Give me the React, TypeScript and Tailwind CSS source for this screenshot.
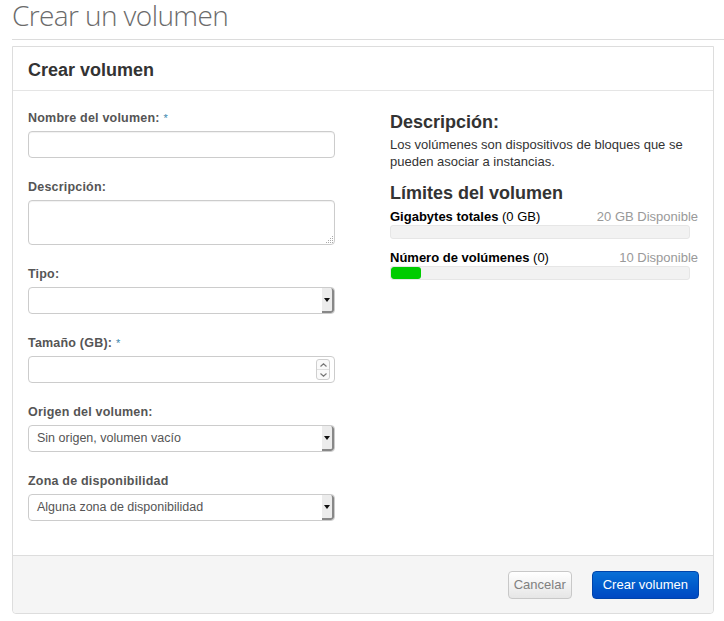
import React from 'react';

function Label({ text, required }: { text: string; required?: boolean }) {
  return (
    <div className="h-[20px] leading-[20px] text-[12.5px] font-bold text-[#555] mb-[3px] tracking-[0.2px]">
      {text}
      {required && <span className="ml-[4px] text-[#3a87ad] font-normal text-[11px] align-top">*</span>}
    </div>
  );
}

function SelectBox({ value }: { value?: string }) {
  return (
    <div className="flex h-[27px] w-[307px] rounded-[4px] border border-[#ccc] bg-white overflow-hidden">
      <div className="flex-1 pl-[8px] leading-[25px] text-[12.5px] text-[#555]">{value}</div>
      <div className="flex w-[12px] items-center justify-center bg-[#ececec] border-r-2 border-b-2 border-[#888] rounded-r-[3px]">
        <svg width="6" height="4" viewBox="0 0 6 4">
          <path d="M0 0h6L3 4z" fill="#111" />
        </svg>
      </div>
    </div>
  );
}

function Field({ label, required, children }: { label: string; required?: boolean; children: React.ReactNode }) {
  return (
    <div className="mb-[19px]">
      <Label text={label} required={required} />
      {children}
    </div>
  );
}

function Bar({ pct }: { pct: number }) {
  return (
    <div className="h-[14px] w-[300px] rounded-[3px] bg-[#f2f2f2] border border-[#e6e6e6] overflow-hidden">
      {pct > 0 && <div className="h-full rounded-[3px] bg-[#00cc00]" style={{ width: `${pct}%` }} />}
    </div>
  );
}

export default function App() {
  return (
    <div className="w-[724px] h-[621px] bg-white overflow-hidden font-['Liberation_Sans',Arial,sans-serif]">
      <div className="ml-[12px] h-[40px] border-b border-[#dcdcdc]">
        <h1 className="font-['Open_Sans',sans-serif] font-light text-[28px] leading-[30px] tracking-[-0.6px] text-[#6b6b6b]">
          Crear un volumen
        </h1>
      </div>

      <div className="ml-[12px] mt-[6px] w-[702px] border border-[#dddddd] rounded-b-[4px]">
        <div className="h-[44px] border-b border-[#e5e5e5] pl-[15px] flex items-center">
          <h3 className="text-[18px] font-bold text-[#333] leading-[20px] pt-[3px]">Crear volumen</h3>
        </div>

        <div className="flex pl-[15px] pt-[17px] h-[464px]">
          <div className="w-[307px]">
            <Field label="Nombre del volumen:" required>
              <div className="h-[27px] w-[307px] rounded-[4px] border border-[#ccc] bg-white shadow-[inset_0_1px_1px_rgba(0,0,0,0.06)]" />
            </Field>
            <Field label="Descripción:">
              <div className="relative h-[45px] w-[307px] rounded-[4px] border border-[#ccc] bg-white shadow-[inset_0_1px_1px_rgba(0,0,0,0.06)]">
                <svg className="absolute right-[1px] bottom-[1px]" width="7" height="7" viewBox="0 0 7 7">
                  <rect x="6" y="0" width="1" height="1" fill="#aaa" />
                  <rect x="4" y="2" width="1" height="1" fill="#aaa" />
                  <rect x="6" y="2" width="1" height="1" fill="#aaa" />
                  <rect x="2" y="4" width="1" height="1" fill="#aaa" />
                  <rect x="4" y="4" width="1" height="1" fill="#aaa" />
                  <rect x="6" y="4" width="1" height="1" fill="#aaa" />
                  <rect x="0" y="6" width="1" height="1" fill="#aaa" />
                  <rect x="2" y="6" width="1" height="1" fill="#aaa" />
                  <rect x="4" y="6" width="1" height="1" fill="#aaa" />
                  <rect x="6" y="6" width="1" height="1" fill="#aaa" />
                </svg>
              </div>
            </Field>
            <Field label="Tipo:">
              <SelectBox />
            </Field>
            <Field label="Tamaño (GB):" required>
              <div className="flex h-[27px] w-[307px] rounded-[4px] border border-[#ccc] bg-white items-center justify-end pr-[4px]">
                <div className="flex flex-col w-[14px] h-[21px] border border-[#cfcfcf] rounded-[3px] bg-[#fafafa]">
                  <div className="flex flex-1 items-center justify-center border-b border-[#e0e0e0]">
                    <svg width="7" height="4" viewBox="0 0 7 4">
                      <path d="M0.5 3.5L3.5 0.8L6.5 3.5" stroke="#777" fill="none" strokeWidth="1.2" />
                    </svg>
                  </div>
                  <div className="flex flex-1 items-center justify-center">
                    <svg width="7" height="4" viewBox="0 0 7 4">
                      <path d="M0.5 0.5L3.5 3.2L6.5 0.5" stroke="#777" fill="none" strokeWidth="1.2" />
                    </svg>
                  </div>
                </div>
              </div>
            </Field>
            <Field label="Origen del volumen:">
              <SelectBox value="Sin origen, volumen vacío" />
            </Field>
            <Field label="Zona de disponibilidad">
              <SelectBox value="Alguna zona de disponibilidad" />
            </Field>
          </div>

          <div className="ml-[55px] w-[308px] text-[13px] text-[#333]">
            <h3 className="text-[18px] font-bold leading-[22px] mt-[3px]">Descripción:</h3>
            <p className="leading-[17px] mt-[3px]">
              Los volúmenes son dispositivos de bloques que se pueden asociar a instancias.
            </p>
            <h3 className="text-[18px] font-bold leading-[22px] mt-[12px]">Límites del volumen</h3>
            <div className="flex justify-between leading-[16px] mt-[5px] text-black">
              <span>
                <span className="font-bold">Gigabytes totales</span> (0 GB)
              </span>
              <span className="text-[#999]">20 GB Disponible</span>
            </div>
            <div>
              <Bar pct={0} />
            </div>
            <div className="flex justify-between leading-[16px] mt-[11px] text-black">
              <span>
                <span className="font-bold">Número de volúmenes</span> (0)
              </span>
              <span className="text-[#999]">10 Disponible</span>
            </div>
            <div>
              <Bar pct={10} />
            </div>
          </div>
        </div>

        <div className="h-[58px] bg-[#f5f5f5] border-t border-[#dddddd] flex items-center justify-end gap-[20px] pr-[14px] rounded-b-[4px]">
          <button
            type="button"
            className="h-[28px] px-[5px] rounded-[4px] border border-[#c8c8c8] bg-gradient-to-b from-white to-[#e6e6e6] text-[13px] text-[#808080]"
          >
            Cancelar
          </button>
          <button
            type="button"
            className="h-[28px] px-[10px] rounded-[4px] border border-[#0044aa] bg-gradient-to-b from-[#0a6fd6] to-[#0048c2] text-[13px] text-white"
          >
            Crear volumen
          </button>
        </div>
      </div>
    </div>
  );
}
